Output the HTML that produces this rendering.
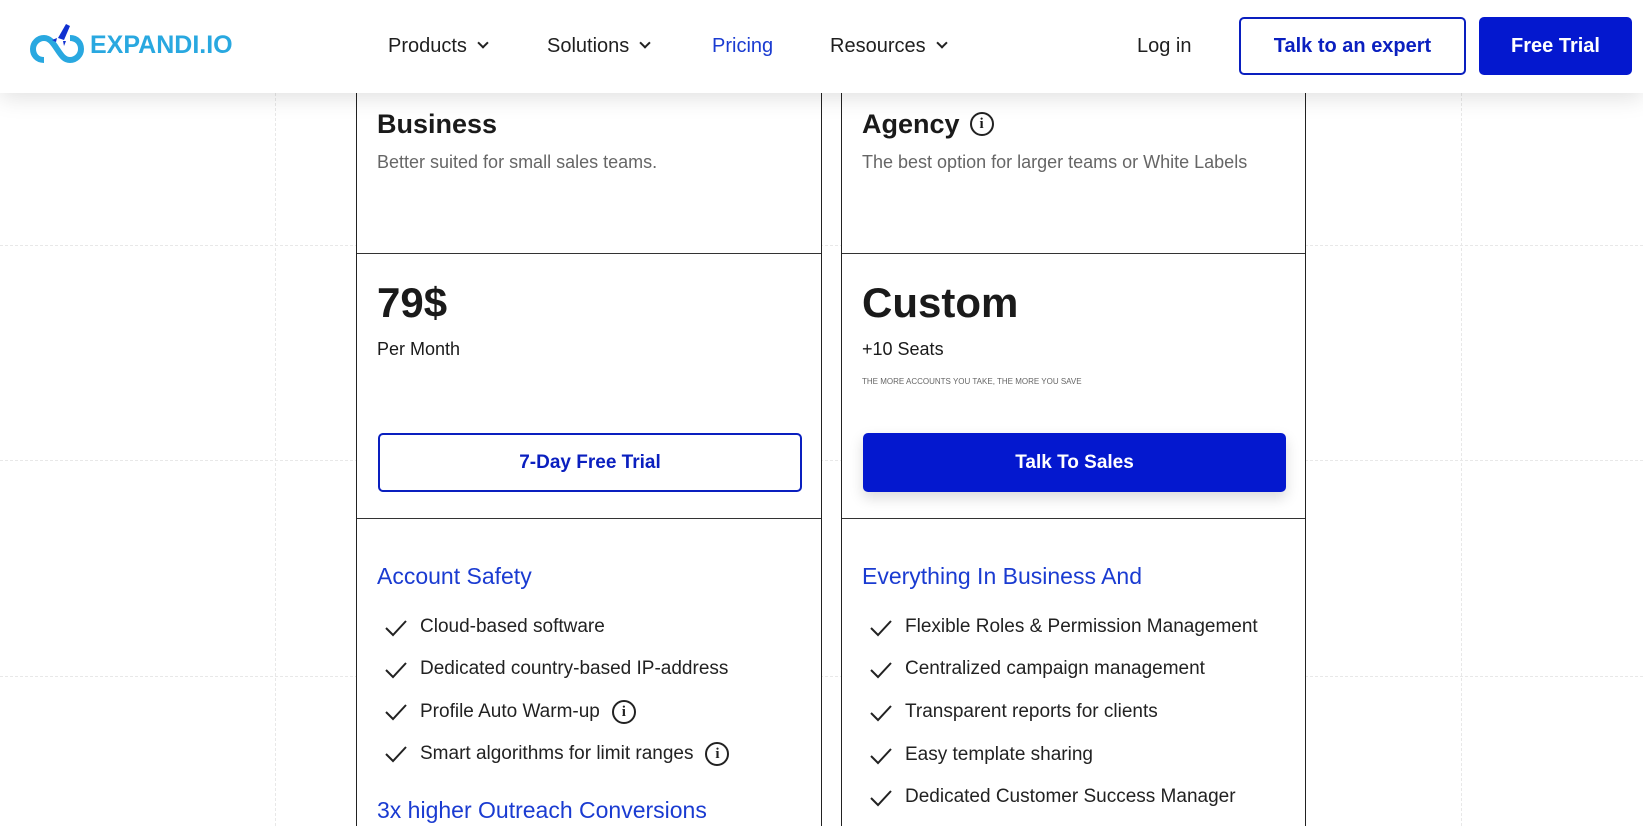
<!DOCTYPE html>
<html><head><meta charset="utf-8"><style>
*{margin:0;padding:0;box-sizing:border-box}
body{width:1643px;height:826px;overflow:hidden;background:#fff;font-family:"Liberation Sans",sans-serif;position:relative;color:#1a1a1a}
.hl{position:absolute;left:0;width:1643px;border-top:1px dashed #e8e8e8}
.vl{position:absolute;top:93px;height:733px;border-left:1px dashed #e8e8e8}
header{position:absolute;left:0;top:0;width:1643px;height:93px;background:#fff;box-shadow:0 4px 22px rgba(0,0,0,.13);z-index:5}
.nav{position:absolute;top:35px;font-size:20px;color:#1f1f1f}
.chev{display:inline-block;width:8px;height:8px;border-right:2px solid #222;border-bottom:2px solid #222;transform:rotate(45deg);margin-left:12px;position:relative;top:-5px}
.btn{position:absolute;border-radius:5px;font-weight:bold;font-size:20px;display:flex;align-items:center;justify-content:center}
.card{position:absolute;top:93px;height:733px;border-left:1px solid #222;border-right:1px solid #222;background:#fff}
.sep{position:absolute;left:0;right:0;border-top:1px solid #333}
.t{position:absolute;white-space:nowrap}
.li{position:absolute;left:36px;font-size:19px;color:#222;white-space:nowrap}
.ck{position:absolute;left:-36px;top:2px}
.info{display:inline-block;width:24px;height:24px;border:2px solid #222;border-radius:50%;text-align:center;font-size:15px;font-weight:bold;line-height:20px;vertical-align:middle;margin-left:12px;font-family:"Liberation Serif",serif}
</style></head><body>
<div class="hl" style="top:245px"></div><div class="hl" style="top:460px"></div><div class="hl" style="top:676px"></div>
<div class="vl" style="left:275px"></div><div class="vl" style="left:1461px"></div>
<header>
<svg style="position:absolute;left:30px;top:22px" width="58" height="44" viewBox="0 0 58 44"><path d="M14 38c-7 0-11-5-11-11s5-11 11-11c6 0 9 5 13 11s7 11 13 11 11-5 11-11-4-11-11-11" fill="none" stroke="#29a8e0" stroke-width="6"/><path d="M36 2l4 2-6 14-6-2z" fill="#1030d0"/><path d="M27 16l-5 2 4 2z M33 19l1 5 2-5z" fill="#1030d0"/></svg>
<div class="t" style="left:90px;top:31px;font-size:25px;font-weight:bold;color:#29a8e0">EXPANDI.IO</div>
<div class="nav" style="left:388px">Products<span class="chev"></span></div>
<div class="nav" style="left:547px">Solutions<span class="chev"></span></div>
<div class="nav" style="left:712px;color:#1a3bd1">Pricing</div>
<div class="nav" style="left:830px">Resources<span class="chev"></span></div>
<div class="nav" style="left:1137px">Log in</div>
<div class="btn" style="left:1239px;top:17px;width:227px;height:58px;border:2px solid #0a1fbf;color:#0a1fbf">Talk to an expert</div>
<div class="btn" style="left:1479px;top:17px;width:153px;height:58px;background:#0418cf;color:#fff">Free Trial</div>
</header>

<div class="card" style="left:356px;width:466px">
<div class="t" style="left:20px;top:16px;font-size:27px;font-weight:bold">Business</div>
<div class="t" style="left:20px;top:59px;font-size:18px;color:#666">Better suited for small sales teams.</div>
<div class="sep" style="top:160px"></div>
<div class="t" style="left:20px;top:186px;font-size:42px;font-weight:bold">79$</div>
<div class="t" style="left:20px;top:246px;font-size:18px">Per Month</div>
<div class="btn" style="left:21px;top:340px;width:424px;height:59px;border:2px solid #0a1fbf;color:#0a1fbf;font-size:19px">7-Day Free Trial</div>
<div class="sep" style="top:425px"></div>
<div class="t" style="left:20px;top:470px;font-size:23px;color:#1a3bd1">Account Safety</div>
<div class="li" style="top:523px;left:63px"><svg class="ck" width="24" height="20"><path d="M2 10l7 7L22 3" fill="none" stroke="#222" stroke-width="2"/></svg>Cloud-based software</div>
<div class="li" style="top:565px;left:63px"><svg class="ck" width="24" height="20"><path d="M2 10l7 7L22 3" fill="none" stroke="#222" stroke-width="2"/></svg>Dedicated country-based IP-address</div>
<div class="li" style="top:607px;left:63px"><svg class="ck" width="24" height="20"><path d="M2 10l7 7L22 3" fill="none" stroke="#222" stroke-width="2"/></svg>Profile Auto Warm-up<span class="info">i</span></div>
<div class="li" style="top:649px;left:63px"><svg class="ck" width="24" height="20"><path d="M2 10l7 7L22 3" fill="none" stroke="#222" stroke-width="2"/></svg>Smart algorithms for limit ranges<span class="info">i</span></div>
<div class="t" style="left:20px;top:704px;font-size:23px;color:#1a3bd1">3x higher Outreach Conversions</div>
</div>

<div class="card" style="left:841px;width:465px">
<div class="t" style="left:20px;top:16px;font-size:27px;font-weight:bold">Agency<span class="info" style="position:relative;top:-2px;margin-left:10px">i</span></div>
<div class="t" style="left:20px;top:59px;font-size:18px;color:#666">The best option for larger teams or White Labels</div>
<div class="sep" style="top:160px"></div>
<div class="t" style="left:20px;top:186px;font-size:42px;font-weight:bold">Custom</div>
<div class="t" style="left:20px;top:246px;font-size:18px">+10 Seats</div>
<div class="t" style="left:20px;top:284px;font-size:8px;color:#666">THE MORE ACCOUNTS YOU TAKE, THE MORE YOU SAVE</div>
<div class="btn" style="left:21px;top:340px;width:423px;height:59px;background:#0418cf;color:#fff;font-size:19px;box-shadow:0 6px 14px rgba(0,0,0,.15)">Talk To Sales</div>
<div class="sep" style="top:425px"></div>
<div class="t" style="left:20px;top:470px;font-size:23px;color:#1a3bd1">Everything In Business And</div>
<div class="li" style="top:523px;left:63px"><svg class="ck" width="24" height="20"><path d="M2 10l7 7L22 3" fill="none" stroke="#222" stroke-width="2"/></svg>Flexible Roles &amp; Permission Management</div>
<div class="li" style="top:565px;left:63px"><svg class="ck" width="24" height="20"><path d="M2 10l7 7L22 3" fill="none" stroke="#222" stroke-width="2"/></svg>Centralized campaign management</div>
<div class="li" style="top:608px;left:63px"><svg class="ck" width="24" height="20"><path d="M2 10l7 7L22 3" fill="none" stroke="#222" stroke-width="2"/></svg>Transparent reports for clients</div>
<div class="li" style="top:651px;left:63px"><svg class="ck" width="24" height="20"><path d="M2 10l7 7L22 3" fill="none" stroke="#222" stroke-width="2"/></svg>Easy template sharing</div>
<div class="li" style="top:693px;left:63px"><svg class="ck" width="24" height="20"><path d="M2 10l7 7L22 3" fill="none" stroke="#222" stroke-width="2"/></svg>Dedicated Customer Success Manager</div>
</div>
</body></html>
